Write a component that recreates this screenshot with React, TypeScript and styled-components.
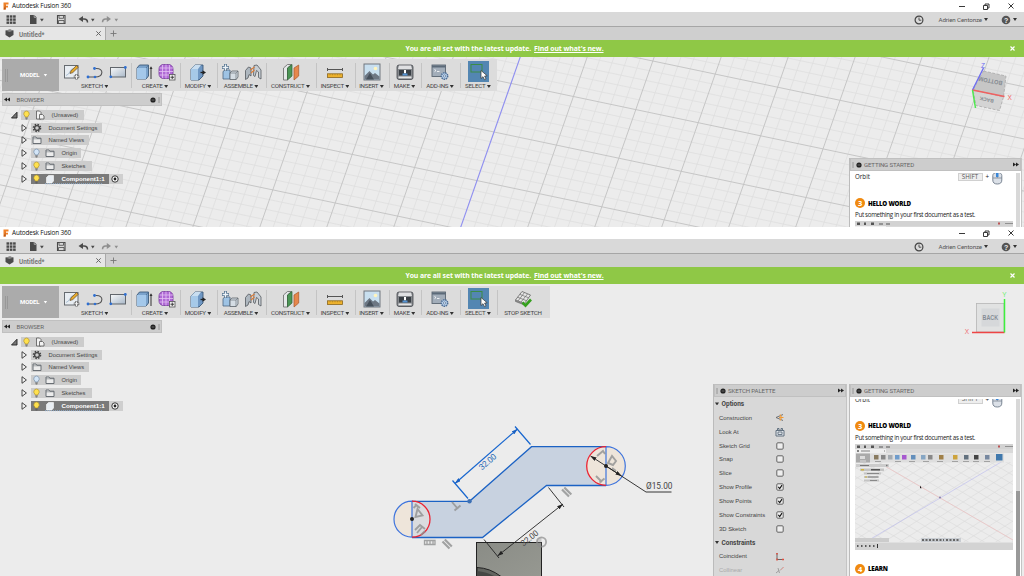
import React from 'react';
import styled, { createGlobalStyle, css } from 'styled-components';

const GlobalStyle = createGlobalStyle`
  * { box-sizing: border-box; }
  html, body { margin: 0; padding: 0; background: #fff; overflow: hidden; }
  body { font-family: 'Liberation Sans', Arial, sans-serif; color: #333; }
  svg { display: block; flex: none; overflow: visible; }
`;

const Screen = styled.div`
  width: 1024px;
  height: 576px;
  display: grid;
  grid-template-rows: 227px 349px;
  overflow: hidden;
`;

const Window = styled.section`
  display: grid;
  grid-template-rows: 12px 15px 13px 17px minmax(0, 1fr);
  overflow: hidden;
`;

const TitleBar = styled.header`
  display: flex;
  align-items: center;
  padding: 0 10px 0 3px;
  background: #fff;
  justify-content: space-between;
`;

const AppName = styled.div`
  display: flex;
  align-items: center;
  gap: 3px;
  font: 6.4px/12px 'Open Sans', 'Noto Sans', sans-serif;
  letter-spacing: -0.15px;
  color: #111;
`;

const Controls = styled.div`
  display: flex;
  align-items: center;
  gap: 18px;
`;

const QuickBar = styled.div`
  display: flex;
  align-items: center;
  justify-content: space-between;
  background: #d9d9d9;
  border-bottom: 1px solid #a6a6a6;
  padding: 1px 7px 0 5px;
`;

const Account = styled.div`
  display: flex;
  align-items: center;
  font: 6.2px/12px Roboto, sans-serif;
  letter-spacing: -0.12px;
  color: #555;
`;

const UserName = styled.span`
  margin: 0 3px 0 14.5px;
  width: 42.5px;
  white-space: nowrap;
`;

const Spacer = styled.i<{ $w: number }>`
  flex: none;
  width: ${(p) => p.$w}px;
`;

const Caret = styled.i<{ $c?: string }>`
  display: inline-block;
  flex: none;
  width: 4px;
  height: 3px;
  background: ${(p) => p.$c ?? '#333'};
  clip-path: polygon(0 0, 100% 0, 50% 100%);
`;

const TabStrip = styled.div`
  display: flex;
  background: #cfcfcf;
  height: 13px;
`;

const Tab = styled.div`
  display: flex;
  align-items: center;
  width: 106px;
  padding: 0 4px 0 5px;
  background: #e6e6e6;
  border-right: 1px solid #aaa;
  font: bold 6.4px/12px Roboto, sans-serif;
  color: #777;
  span { flex: 1; padding: 2px 0 0 5px; }
`;

const NewTab = styled.div`
  display: flex;
  align-items: center;
  padding-left: 4px;
`;

const Notice = styled.div`
  display: grid;
  grid-template-columns: 1fr auto;
  align-items: center;
  padding-right: 9px;
  background: #8fc846;
  color: #fff;
  font: bold 6.9px/16px 'Open Sans', sans-serif;
  letter-spacing: -0.09px;
  p { margin: 0; padding-right: 1px; text-align: center; white-space: pre; }
  u { margin-left: 3px; }
`;

const Viewport = styled.main`
  position: relative;
  display: flex;
  justify-content: space-between;
  overflow: hidden;
  background: #ececec;
`;

const Scene = styled.svg`
  position: absolute;
  inset: 0;
`;

const LeftStack = styled.div`
  position: relative;
  padding: 2px 0 0 2px;
`;

const Ribbon = styled.div`
  display: flex;
  height: 32px;
  background: #dcdcdc;
`;

const Workspace = styled.div`
  display: flex;
  align-items: center;
  width: 57px;
  padding-left: 3px;
  background: #ababab;
  color: #fff;
  font: bold 6px/10px Roboto, sans-serif;
  letter-spacing: -0.1px;
  span { margin: 0 4px 0 12px; }
`;

const Grip = styled.i`
  width: 3px;
  height: 13px;
  border: solid #989898;
  border-width: 0 1px;
`;

const Group = styled.div<{ $w: number; $first?: boolean }>`
  width: ${(p) => p.$w}px;
  padding-top: 2px;
  display: flex;
  flex-direction: column;
  align-items: center;
  ${(p) => !p.$first && css`background: linear-gradient(#c4c4c4, #c4c4c4) 0 4px / 1px 25px no-repeat;`}
`;

const GroupIcons = styled.div`
  display: flex;
  gap: 5px;
  height: 22px;
  align-items: center;
`;

const GroupLabel = styled.div`
  display: flex;
  align-items: center;
  gap: 1.5px;
  white-space: nowrap;
  font: 6.2px/9px Roboto, sans-serif;
  letter-spacing: -0.23px;
  color: #444;
`;

const SelectTile = styled.div`
  width: 21px;
  height: 21px;
  background: #5386b2;
  display: grid;
  place-items: center;
`;

const BarHeader = styled.div<{ $w?: number; $top?: number }>`
  display: flex;
  align-items: center;
  flex: none;
  height: 13px;
  width: ${(p) => (p.$w ? `${p.$w}px` : 'auto')};
  margin-top: ${(p) => p.$top ?? 0}px;
  background: #cdcdcd;
  border: 1px solid #c0c0c0;
  font: 6.1px/11px Roboto, sans-serif;
  color: #666;
  padding: 0 1px;
  gap: 2px;
  span { flex: 1; white-space: nowrap; }
`;

const PanelTitle = styled.span<{ $pad?: number; $tight?: boolean }>`
  padding-left: ${(p) => p.$pad ?? 0}px;
  letter-spacing: ${(p) => (p.$tight ? '-0.15px' : '-0.08px')};
`;

const Tree = styled.div`
  padding-top: 2.4px;
  margin-left: 8px;
`;

const TreeRow = styled.div<{ $child?: boolean }>`
  display: flex;
  align-items: center;
  height: 12.8px;
  padding-left: ${(p) => (p.$child ? 11 : 0)}px;
  gap: ${(p) => (p.$child ? 4 : 3)}px;
`;

const TreeCell = styled.div<{ $w: number; $active?: boolean }>`
  display: flex;
  align-items: center;
  height: 10px;
  width: ${(p) => p.$w}px;
  padding-left: 1px;
  gap: 4px;
  background: ${(p) => (p.$active ? 'linear-gradient(90deg, #7a7a7a 78px, #cfcfcf 78px)' : '#cccccc')};
  color: ${(p) => (p.$active ? '#fff' : '#444')};
  font: ${(p) => (p.$active ? 'bold 6.2px' : '5.8px')}/10px 'Liberation Sans', sans-serif;
  span { white-space: nowrap; padding-left: 2.5px; }
`;

const ActiveName = styled.span`
  width: 47.5px;
  flex: none;
`;

const Dock = styled.div`
  position: relative;
  display: flex;
  align-items: flex-end;
  gap: 2px;
  padding-right: 2px;
`;

const Palette = styled.aside<{ $w: number; $h: number; $white?: boolean }>`
  width: ${(p) => p.$w}px;
  height: ${(p) => p.$h}px;
  display: flex;
  flex-direction: column;
  overflow: hidden;
  background: ${(p) => (p.$white ? '#fff' : '#d8d8d8')};
  border-left: 1px solid #bbb;
  border-right: 1px solid #c4c4c4;
`;

const OptionRow = styled.div<{ $head?: boolean; $off?: boolean }>`
  display: grid;
  grid-template-columns: 54.5px 12px;
  align-items: center;
  flex: none;
  height: 13.87px;
  padding-left: ${(p) => (p.$head ? 1 : 5)}px;
  font: ${(p) => (p.$head ? 'bold 6.5px Roboto' : "5.9px 'Liberation Sans'")}, sans-serif;
  color: ${(p) => (p.$off ? '#aaa' : '#444')};
  white-space: nowrap;
  svg { justify-self: center; }
`;

const HeadText = styled.span`
  display: flex;
  align-items: center;
  gap: 2.5px;
`;

const Guide = styled.div`
  display: flex;
  flex: 1;
  min-height: 0;
  overflow: hidden;
  border-top: 2px solid #fff;
`;

const GuideBody = styled.div<{ $shift: number }>`
  width: 158px;
  margin-left: 5px;
  margin-top: ${(p) => p.$shift}px;
  font: 6.2px/9px 'Open Sans', sans-serif;
  color: #222;
  white-space: nowrap;
`;

const OrbitLine = styled.div`
  display: flex;
  height: 15px;
  align-items: flex-start;
  > span { width: 102.5px; padding-top: 1px; }
  > em { font-style: normal; width: 6px; padding-top: 1px; }
`;

const Key = styled.div`
  flex: none;
  width: 25px;
  height: 8.5px;
  margin: 1.5px 3px 0 0;
  border: 1px solid #d0d0d0;
  background: #eee;
  text-align: center;
  font: 6.2px/6.5px 'Open Sans', sans-serif;
  color: #555;
`;

const Step = styled.div<{ $top: number }>`
  display: flex;
  align-items: center;
  gap: 3px;
  height: 10px;
  margin-top: ${(p) => p.$top}px;
  font-weight: 800;
  font-size: 6.2px;
  letter-spacing: -0.25px;
  color: #000;
  b {
    width: 10px;
    height: 10px;
    border-radius: 50%;
    background: #f08a10;
    color: #fff;
    text-align: center;
    font: bold 7.5px/10px 'Open Sans', sans-serif;
  }
`;

const Para = styled.p`
  margin: 2px 0 2px;
  letter-spacing: -0.31px;
`;

const Scrollbar = styled.div<{ $thumb?: number }>`
  width: 4px;
  margin-left: 3px;
  background: linear-gradient(#d8d8d8 ${(p) => p.$thumb ?? 999}px, #999 0);
`;

const Svg = ({ w = 18, h = 18, children }: { w?: number; h?: number; children: React.ReactNode }) => (
  <svg width={w} height={h} viewBox={`0 0 ${w} ${h}`} fill="none">{children}</svg>
);

/* ---------- ribbon icons ---------- */

const SketchIcon = () => (
  <Svg>
    <rect x="1.5" y="2.5" width="13.5" height="12.5" fill="#e8edf2" stroke="#666b70" />
    <path d="M3 12.5q3-1 4-4t4-3" stroke="#9ab4cc" strokeWidth=".8" />
    <path d="M7 10.5l1-2.7 5.5-5.3 1.8 1.8-5.5 5.3z" fill="#e4a92c" stroke="#684b22" strokeWidth=".7" />
    <path d="M13.5 11v5.5M10.8 13.8h5.5" stroke="#666" strokeWidth="2.4" />
    <path d="M13.5 11.6v4.3M11.4 13.8h4.2" stroke="#f2f2f2" strokeWidth="1.1" />
  </Svg>
);
const LineIcon = () => (
  <Svg>
    <path d="M2 14h7M9 14c9 0 9-9 1-8.5" stroke="#555" strokeWidth="1.1" />
    <path d="M9.5 5.5H8" stroke="#4d7bb4" strokeWidth="1.2" />
    <g fill="#2f6fd0"><circle cx="2" cy="14" r="1.4" /><circle cx="9" cy="14" r="1.3" /><circle cx="8.5" cy="5.5" r="1.4" /></g>
  </Svg>
);
const RectIcon = () => (
  <Svg>
    <rect x="1.5" y="4.5" width="15" height="9.5" fill="url(#metal)" stroke="#61666c" />
    <g fill="#2f6fd0"><circle cx="1.8" cy="13.8" r="1.4" /><circle cx="16.3" cy="4.5" r="1.4" /></g>
  </Svg>
);
const ExtrudeIcon = () => (
  <Svg>
    <path d="M2 5l2.500-3h9v11l-2.500 3H2z" fill="#7ba3cc" stroke="#3c5a78" strokeWidth=".9" />
    <path d="M2 5h9v11H2z" fill="#a4c8ea" />
    <path d="M11 5l2.500-3" stroke="#47678a" strokeWidth=".7" />
    <path d="M16 16V4.500" stroke="#333" /><path d="M14.500 6L16 3.200 17.500 6z" fill="#333" />
  </Svg>
);
const FormIcon = () => (
  <Svg>
    <rect x="1" y="1.500" width="14" height="14" rx="4.500" fill="#b06ad6" stroke="#73399b" strokeWidth=".8" />
    <path d="M4.500 2v13M8 1.500v14M11.500 2v13M1.500 5h13.500M1 8.500h14M1.500 12h13.500" stroke="#e3c2f3" strokeWidth=".8" />
    <rect x="11.500" y="11.500" width="5.500" height="5.500" fill="#eee" stroke="#555" strokeWidth=".8" />
    <path d="M14.250 12.500v3.500M12.500 14.250h3.500" stroke="#333" strokeWidth=".9" />
  </Svg>
);
const ModifyIcon = () => (
  <Svg>
    <path d="M2 6l4-4h8v11l-4 4H2z" fill="#6f97c3" stroke="#3c5a78" strokeWidth=".9" />
    <path d="M2 6h7v11H2z" fill="#a6c9e8" /><path d="M2 6l4-4h6L9 6z" fill="#c9def0" />
    <path d="M11.500 9.500H15" stroke="#222" strokeWidth="1.300" /><path d="M13.500 7.300v4.400l3.500-2.200z" fill="#222" />
  </Svg>
);
const AssembleIcon = () => (
  <Svg>
    <path d="M2 8.500L4 7h5v9H2z" fill="#9ec3e4" stroke="#4b6680" strokeWidth=".8" />
    <path d="M9 10l1.800-2H17v6l-1.800 2.500H9z" fill="#d5dde4" stroke="#5a6268" strokeWidth=".8" />
    <path d="M9 10h6v6.500M15 10l2-2" stroke="#5a6268" strokeWidth=".6" />
    <path d="M4.500 1v7M1 4.500h7" stroke="#56748f" strokeWidth="3" /><path d="M4.500 1.600v5.800M1.600 4.500h5.800" stroke="#edf3f8" strokeWidth="1.300" />
  </Svg>
);
const JointIcon = () => (
  <Svg>
    <path d="M1.500 7.500L4.500 4 7 5v8l-2-1.500-1 3.500-2.500 1.500z" fill="#aeb7bf" stroke="#54595e" strokeWidth=".8" />
    <path d="M10 2.500l3-.5 4 5v9l-2.500-1.500V9l-2-1.500-1.500 6-1.500-1z" fill="#c7ced4" stroke="#54595e" strokeWidth=".8" />
    <path d="M6.500 7l4-3M7 10l3.500-3" stroke="#de7d36" strokeWidth="1.100" />
  </Svg>
);
const ConstructIcon = () => (
  <Svg>
    <path d="M1.500 5l4-3.500h4l-4 3.500v12h-4z" fill="#e4e7e8" stroke="#666" strokeWidth=".8" />
    <path d="M5.500 5l4.500-3.500v11.500L5.500 17z" fill="#4b9655" stroke="#2f6236" strokeWidth=".7" />
    <path d="M12 5l4.700-3v11L12 17z" fill="#e6874c" stroke="#a85728" strokeWidth=".7" />
  </Svg>
);
const InspectIcon = () => (
  <Svg>
    <path d="M1.500 6.500h15M1.500 5v3M16.500 5v3" stroke="#555" />
    <rect x="1.500" y="10.800" width="15" height="3.700" fill="#edb22e" stroke="#8b671f" strokeWidth=".8" />
    <path d="M4 11v1.300M6.500 11v1.300M9 11v1.300M11.500 11v1.300M14 11v1.300" stroke="#8b671f" strokeWidth=".4" />
  </Svg>
);
const InsertIcon = () => (
  <Svg>
    <rect x="1" y="1" width="16" height="16" fill="#c8dfef" stroke="#70777e" />
    <circle cx="12.500" cy="5.500" r="1.800" fill="#fff5bd" />
    <path d="M1.500 13l5-5 3.500 3.500 2-1.500 4.500 3.500v3h-15z" fill="#6d7783" />
    <path d="M3 16.500l4-6.500 4 6.500z" fill="#46505b" />
  </Svg>
);
const MakeIcon = () => (
  <Svg>
    <rect x="1" y="2" width="16" height="14.500" rx="2" fill="#84888c" stroke="#44484c" strokeWidth=".8" />
    <path d="M3 2.500h12l1 3.500H2z" fill="#dfe0e2" />
    <rect x="3" y="7" width="12" height="5.500" fill="#3a4046" /><path d="M8 7h2v2.500L9 11 8 9.500z" fill="#fff" />
    <path d="M6.500 10.500h5v2h-5z" fill="#5594d5" /><rect x="2.500" y="13.500" width="13" height="1.800" fill="#e3e4e5" />
  </Svg>
);
const AddinsIcon = () => (
  <Svg>
    <rect x="1" y="2" width="13.500" height="11.500" fill="#a2adb9" stroke="#5b6672" strokeWidth=".9" />
    <path d="M1 3.500h13.500" stroke="#5c6a79" strokeWidth="2" />
    <path d="M3.500 6.500l1.500 1-1.500 1.200M6 8.500h2.500" stroke="#fff" strokeWidth=".8" />
    <circle cx="13.500" cy="13" r="3.200" fill="#b9d0e9" stroke="#4c6d96" strokeWidth="1.500" strokeDasharray="1.500 .7" />
    <circle cx="13.500" cy="13" r="1.100" fill="#fff" stroke="#4c6d96" strokeWidth=".7" />
  </Svg>
);
const SelectIcon = () => (
  <SelectTile>
    <Svg w={21} h={21}>
      <rect x="3" y="3.500" width="11" height="7.500" stroke="#3c8c46" />
      <path d="M13 9.500v8l2-1.800 1.500 3 1.500-.8-1.400-2.800 2.600-.3z" fill="#fff" stroke="#333" strokeWidth=".7" />
    </Svg>
  </SelectTile>
);
const StopIcon = () => (
  <Svg>
    <path d="M1.500 10L8 1.500 16.500 5 10.500 13.500z" fill="#e6e6e6" stroke="#666" strokeWidth=".8" />
    <path d="M4 11L10.500 2.500M7 12L13.500 4M3.500 7.200l9 3.500M5.700 4.300l9 3.500" stroke="#777" strokeWidth=".8" />
    <path d="M1.500 10v1.500l9 3.500v-1.500" fill="#888" stroke="#666" strokeWidth=".6" />
    <path d="M8.500 12.500l3 3 5.500-6" stroke="#35a01e" strokeWidth="2.600" />
  </Svg>
);

/* ---------- small icons ---------- */

const Bulb = ({ on }: { on?: boolean }) => (
  <Svg w={9} h={10}>
    <path d="M4.500 1a2.800 2.800 0 0 1 1.500 5.100V7H3v-.9A2.800 2.800 0 0 1 4.500 1z" fill={on ? '#ffe14e' : '#d3e5f7'} stroke={on ? '#b5962d' : '#7890ab'} strokeWidth=".7" />
    <path d="M3.300 8h2.400M3.700 9h1.600" stroke="#555" strokeWidth=".8" />
  </Svg>
);
const Folder = () => (
  <Svg w={10} h={10}>
    <path d="M1 2h3l.8 1.200H9V8.500H1z" fill="#ececec" stroke="#5c6269" strokeWidth=".9" />
    <path d="M1 3.800h8" stroke="#5c6269" strokeWidth=".5" />
  </Svg>
);
const DocIcon = () => (
  <Svg w={10} h={10}>
    <path d="M1.500 1h3l1.500 1.500V9h-4.500z" fill="#f2f2f2" stroke="#555" strokeWidth=".8" />
    <path d="M4.500 4.500h3L9 6v3H4.500z" fill="#f2f2f2" stroke="#555" strokeWidth=".8" />
  </Svg>
);
const Gear = () => (
  <Svg w={10} h={10}>
    <circle cx="5" cy="5" r="3.500" stroke="#444" strokeWidth="1.600" strokeDasharray="1.500 1.250" />
    <circle cx="5" cy="5" r="2.400" stroke="#444" strokeWidth="1.300" />
  </Svg>
);
const Cube = () => (
  <Svg w={10} h={10}>
    <path d="M1.500 3.500L3.500 1.500h5V7L6.800 9H1.500z" fill="#e9eef3" stroke="#fff" strokeWidth=".6" />
    <path d="M0 9.700h58" stroke="#92b7e0" strokeWidth=".8" strokeDasharray="1 1" />
  </Svg>
);
const Expander = () => <Svg w={6} h={8}><path d="M1 .700v6.600L5.400 4z" fill="#f4f4f4" stroke="#333" strokeWidth=".9" /></Svg>;
const Expanded = () => <Svg w={8} h={8}><path d="M1.500 7H7V1.200z" fill="#777" stroke="#222" strokeWidth=".9" /></Svg>;
const Rewind = ({ flip }: { flip?: boolean }) => (
  <Svg w={6} h={5}><path transform={flip ? 'translate(6 0) scale(-1 1)' : ''} d="M0 2.500L3 .5v4zM3 2.500L6 .5v4z" fill="#222" /></Svg>
);
const Dot = () => <Svg w={6} h={6}><circle cx="3" cy="3" r="2.600" fill="#222" /><path d="M1.600 3h2.800" stroke="#999" strokeWidth=".6" /></Svg>;
const EdgeGrip = () => <Svg w={2} h={8}><path d="M1 1v6" stroke="#888" strokeWidth=".8" /></Svg>;
const Check = ({ on }: { on?: boolean }) => (
  <Svg w={8} h={8}>
    <rect x=".8" y=".8" width="6.400" height="6.400" rx="1" fill="#eee" stroke="#555" strokeWidth=".9" />
    {on && <path d="M2.300 3.900l1.400 1.600 2.300-3.400" stroke="#111" strokeWidth="1.100" />}
  </Svg>
);

const QuickIcons = () => (
  <Svg w={120} h={13}>
    <g fill="#4a4a4a">
      {[0, 1, 2].map((r) => [0, 1, 2].map((c) => <rect key={`${r}${c}`} x={1.500 + c * 3.300} y={2.300 + r * 3.100} width="2.600" height="2.400" />))}
      <path d="M25 2h4.300l2.200 2.200V11H25z" />
      <path d="M35 5.800h3.800L36.900 8.600zM86 5.800h3.600L87.800 8.600z" />
    </g>
    <path d="M29.200 2v2.400h2.300" stroke="#d9d9d9" strokeWidth=".6" />
    <path d="M52.500 2.500h7.500v8h-7.500z" stroke="#4a4a4a" strokeWidth="1.100" />
    <path d="M54 2.500h4.500v2.800H54zM53.500 7.500h5.500v3h-5.500z" fill="#d9d9d9" stroke="#4a4a4a" strokeWidth=".8" />
    <path d="M76 6h3q3.500 0 3.500 3.400" stroke="#4a4a4a" strokeWidth="1.500" /><path d="M78 3.100v5.800L73.500 6z" fill="#4a4a4a" />
    <g opacity=".75"><path d="M103 6h-2.500q-3 0-3 3.200" stroke="#777" strokeWidth="1.400" /><path d="M101.800 3.100v5.800l4.200-2.900zM109.500 5.800h3.600l-1.800 2.800z" fill="#777" /></g>
  </Svg>
);

/* ---------- data ---------- */

const groups = [
  { label: 'SKETCH', w: 71.5, icons: [SketchIcon, LineIcon, RectIcon] },
  { label: 'CREATE', w: 49, icons: [ExtrudeIcon, FormIcon] },
  { label: 'MODIFY', w: 37, icons: [ModifyIcon] },
  { label: 'ASSEMBLE', w: 49, icons: [AssembleIcon, JointIcon] },
  { label: 'CONSTRUCT', w: 50, icons: [ConstructIcon] },
  { label: 'INSPECT', w: 39, icons: [InspectIcon] },
  { label: 'INSERT', w: 34, icons: [InsertIcon] },
  { label: 'MAKE', w: 32, icons: [MakeIcon] },
  { label: 'ADD-INS', w: 39, icons: [AddinsIcon] },
  { label: 'SELECT', w: 37, icons: [SelectIcon] },
];

const options: [string, React.ReactNode][] = [
  ['Construction', <Svg w={9} h={9}><path d="M8 1.500L1 4.500l7 3" stroke="#666" strokeWidth=".9" /><path d="M5 1.500l1.500 3L5 7.500M4 4.500h4.500" stroke="#f09a36" strokeWidth="1.100" /></Svg>],
  ['Look At', <Svg w={10} h={10}><path d="M1 3.500h8v5.500H1zM2.500 3V1.500h1.500V3M6 3V1.500h1.500V3" fill="#dfe4ea" stroke="#556575" strokeWidth=".9" /><path d="M3 5h4v2.500H3z" stroke="#556575" strokeWidth=".8" /></Svg>],
  ['Sketch Grid', <Check />],
  ['Snap', <Check />],
  ['Slice', <Check />],
  ['Show Profile', <Check on />],
  ['Show Points', <Check on />],
  ['Show Constraints', <Check on />],
  ['3D Sketch', <Check />],
];

/* ---------- scenes ---------- */

const U = [62.4, 13.1];
const V = [-17, 48.6];
const gridLine = (along: number[], step: number[], k: number, key: string) => {
  const x = 494 + step[0] * k;
  const y = 132 - 57 + step[1] * k;
  return <line key={key} x1={x - along[0] * 16} y1={y - along[1] * 16} x2={x + along[0] * 16} y2={y + along[1] * 16} />;
};

const ModelScene = () => {
  const minor: React.ReactNode[] = [];
  const major: React.ReactNode[] = [];
  for (let i = -60; i <= 60; i++) {
    const list = i % 5 === 0 ? major : minor;
    list.push(gridLine(U, V, i / 5, `h${i}`));
    if (i !== 0) list.push(gridLine(V, U, i / 5, `v${i}`));
  }
  return (
    <Scene width="1024" height="170" viewBox="0 0 1024 170">
      <g stroke="#dedede" strokeWidth=".8">{minor}</g>
      <g stroke="#c2c2c2" strokeWidth=".9">{major}</g>
      <g stroke="#8f8ff0" strokeWidth="1.100">{gridLine(V, U, 0, 'axis')}</g>
      <g transform="translate(0 -57)">
        <path d="M983.500 71l22.500 5-2.500 21-30.500-7z" fill="#c6c6c6" stroke="#aaa" strokeWidth=".8" strokeDasharray="3 1.500" />
        <path d="M973 90l30.500 7-4 13.500-23.500-5z" fill="#d4d4d4" stroke="#aaa" strokeWidth=".8" strokeDasharray="3 1.500" />
        <g fontFamily="Liberation Sans, sans-serif" fontWeight="bold" fill="#858b92" textAnchor="middle">
          <text fontSize="6" transform="translate(991 79) rotate(191)" textLength="24" lengthAdjust="spacingAndGlyphs">BOTTOM</text>
          <text fontSize="5" transform="translate(987 98) rotate(191)">BACK</text>
        </g>
        <path d="M972.500 90L983.500 68" stroke="#6d6df0" strokeWidth="1.400" />
        <path d="M972.500 90l32 6.500" stroke="#f06060" strokeWidth="1.300" />
        <path d="M972.500 90l3 18" stroke="#50e850" strokeWidth="1.500" />
        <g fontFamily="Liberation Sans, sans-serif" fontSize="6.500"><text x="981" y="68" fill="#6d6df0">Z</text><text x="1007.500" y="100" fill="#f06060">X</text></g>
      </g>
    </Scene>
  );
};

const SketchScene = () => (
  <Scene width="1024" height="292" viewBox="0 284 1024 292" fill="none">
    <defs>
      <marker id="ab" viewBox="0 0 6 4" refX="6" refY="2" markerWidth="6" markerHeight="4" markerUnits="userSpaceOnUse" orient="auto-start-reverse"><path d="M0 0l6 2-6 2z" fill="#1b62c4" /></marker>
      <marker id="ak" viewBox="0 0 6 4" refX="6" refY="2" markerWidth="6" markerHeight="4" markerUnits="userSpaceOnUse" orient="auto-start-reverse"><path d="M0 0l6 2-6 2z" fill="#222" /></marker>
      <linearGradient id="box" x1="0" y1="0" x2="1" y2="1"><stop stopColor="#8a8c86" /><stop offset="1" stopColor="#979992" /></linearGradient>
    </defs>
    <rect x="476.500" y="542.500" width="65" height="40" fill="url(#box)" stroke="#222" />
    <path d="M477 567.500q13 .5 24 9h-24z" fill="#62645f" stroke="#222" />
    <path d="M477 571q10 1 17 5h-17z" fill="#454744" />
    <circle cx="541.500" cy="542" r="4.600" stroke="#8b8b8b" strokeOpacity=".7" strokeWidth="1.800" />
    <path d="M541.500 537.500a4.500 4.500 0 0 0 0 9z" fill="#8b8b8b" fillOpacity=".35" />

    <path d="M412 501.300h57.500l62-54.600H606v38.600h-60l-63.500 52H412z" fill="#c8d2e0" />
    <circle cx="412" cy="519.200" r="18" fill="#eee5da" />
    <path d="M412 501.200a18 18 0 0 1 0 36z" fill="#dbdcdf" />
    <circle cx="606" cy="466" r="19.300" fill="#eee5da" />
    <path d="M412 501.300h57.500l62-54.600H606M606 485.500h-59.500l-64 52H412" stroke="#1b62c4" strokeWidth="1.300" />
    <path d="M412 501.200a18 18 0 0 0 0 36zM606 446.700a19.300 19.300 0 0 1 0 38.600z" stroke="#3e74dd" strokeWidth="1.200" />
    <path d="M412 501.200a18 18 0 0 1 0 36M606 446.700a19.300 19.300 0 0 0 0 38.600" stroke="#ec2433" strokeWidth="1.300" />
    <circle cx="469.500" cy="501.300" r="2.200" fill="#3c70b4" />
    <g stroke="#8f9090" strokeOpacity=".8" strokeWidth="1.900">
      <path d="M415 504l5 4M413.500 508l3.500-3.500M415.500 517l2-8 5 6.500zM415 530l5-5 5 4M417 533l5-6M421 535l4-4" />
      <path d="M452 502l6 7M454.500 510.500l6-5" />
      <path d="M424.500 540.500h10.500v4h-10.500zM427 541v3M430 541v3M433 541v3" strokeWidth="1.300" />
      <path d="M442.500 541.500l7 7M444.800 539.500l7 7M562 489.500l7 7M564.300 487.500l7 7" strokeWidth="2.200" />
      <path d="M597 456l6-5 2 3M596 476l6 6M599.500 482.500l5-4M608 463l4-7 4 5-3 4zM612 468l4 3" />
    </g>
    <g stroke="#1766cf">
      <path d="M452.500 480.500l15.500 18M515 426.500l15.500 18" strokeWidth="1.200" />
      <path d="M455 483.500l62.500-54.500" markerStart="url(#ab)" markerEnd="url(#ab)" strokeWidth="1.200" />
    </g>
    <g stroke="#222" strokeWidth=".9">
      <path d="M484 539.500l15 18.500M548.500 487.500l15.500 19.500" />
      <path d="M497.500 556l65.500-52" markerStart="url(#ak)" markerEnd="url(#ak)" />
      <path d="M606 466l40 26h25.500" />
      <path d="M590.500 456l31 20" markerStart="url(#ak)" markerEnd="url(#ak)" />
    </g>
    <g fontFamily="Roboto, sans-serif" fontSize="8.300">
      <text transform="translate(487.500 461.700) rotate(-41)" y="3" textAnchor="middle" fill="#2a6bb5" textLength="20">32.00</text>
      <text transform="translate(529.500 538) rotate(-39)" y="3" textAnchor="middle" fill="#444" textLength="20">32.00</text>
      <text x="646" y="488.800" fill="#444" textLength="26.500">Ø15.00</text>
    </g>
    <circle cx="412" cy="519" r="2" fill="#222" /><circle cx="606" cy="466" r="2" fill="#222" />

    <rect x="976.500" y="303.500" width="27.500" height="28.500" fill="#e1e2e2" stroke="#b5b5b5" strokeWidth=".8" />
    <rect x="981.500" y="308.500" width="18" height="18" fill="#d6d8da" />
    <path d="M972 332.400h32.500" stroke="#e44" strokeWidth="1.500" /><path d="M1004.500 332.500V299" stroke="#3df03d" strokeWidth="1.500" />
    <g fontFamily="Liberation Sans, sans-serif" fontSize="6.500" textAnchor="middle">
      <text x="990.300" y="320.300" fontWeight="bold" fill="#858c95" textLength="15.500" lengthAdjust="spacingAndGlyphs">BACK</text>
      <text x="1004.300" y="297" fill="#70ee70">Y</text><text x="967" y="334.300" fill="#ee7070">X</text>
    </g>
  </Scene>
);

const Preview = () => (
  <svg width="158" height="106" viewBox="0 0 158 106" fill="none">
    <rect width="158" height="106" fill="#ececec" />
    <clipPath id="pv"><rect y="18" width="158" height="80" /></clipPath>
    <g clipPath="url(#pv)" strokeWidth=".6">
      <g stroke="#dadada">{Array.from({ length: 26 }, (_, i) => <path key={i} d={`M${i * 16 - 200} 0l190 110M${i * 16 - 40} 0l-190 120`} />)}</g>
      <path d="M28 21l130 75" stroke="#eebaba" /><path d="M158 11L14 96" stroke="#b9b9ee" />
    </g>
    <rect width="158" height="5" fill="#d2d2d2" /><rect y="5" width="158" height="4" fill="#d9d9d9" /><rect y="5" width="31" height="4" fill="#efefef" />
    <g fill="#555"><path d="M2 1.500h3v2.500H2zM9 1.500h2v2.500H9zM16 1.500h3v2.500h-3zM24 2.500h4v1h-4zM31 2.500h4v1h-4z" /><path d="M143 1.500h2v2h-2z" fill="#b55" /><path d="M150 2.300h8v.8h-8zM2 6h2v2H2zM6 6.500h9v1H6zM29 6.500h1v1h-1z" opacity=".7" /></g>
    <rect x="1" y="9.500" width="148" height="9" fill="#dedede" /><rect x="1" y="9.500" width="14" height="9" fill="#aaa" /><path d="M5 12h5v3H5zM5 16.500h6v1H5z" fill="#ddd" />
    {[19, 26, 33, 40, 47, 56, 66, 73, 84, 98, 109, 119, 130].map((x, i) => (
      <rect key={x} x={x} y="11" width="4.500" height="4.500" fill={['#897b60', '#888', '#a4aab0', '#6f9ccc', '#a759cf', '#638fbc', '#86a6c4', '#888', '#a08048', '#cda33c', '#62717e', '#444', '#7788a0'][i]} />
    ))}
    {[20, 40, 54, 68, 82, 97, 108, 118, 129].map((x) => <rect key={x} x={x} y="17" width="6" height=".7" fill="#888" />)}
    <rect x="141" y="10" width="6.500" height="6.500" fill="#4079ad" />
    <rect x="1" y="20" width="33" height="3" fill="#ccc" /><path d="M5 21h9v1H5zM31 20.700h1.500v1.500H31z" fill="#777" />
    <g fill="#aaa"><path d="M5 24.500h24v2.500H5zM9 28.500h17v2H9zM9 32h15v2H9zM9 35.500h15v2H9z" fill="#c4c4c4" /><path d="M16 25h9v1.500h-9z" fill="#555" /><path d="M12 29h12v1H12zM13 32.500h10v1H13zM15 36h7v1h-7z" fill="#888" /><path d="M6 25h3v1.500H6zM10 32.500h2v1h-2z" fill="#d2b53e" /></g>
    <path d="M65 41.500v3l1-.8 1 1z" fill="#111" /><circle cx="85" cy="53.500" r="1" fill="#8a7faa" />
    <rect x="0" y="94" width="34" height="4" fill="#ccc" /><rect x="66" y="94" width="40" height="4" fill="#c9cdd2" />
    <path d="M67 96h22M91 96h13" stroke="#666" strokeWidth="1.800" strokeDasharray="2 1.500" />
    <rect y="98.500" width="158" height="7.500" fill="#d3d3d3" /><path d="M2 102h20" stroke="#333" strokeWidth="1.500" strokeDasharray="1.500 2.500" /><path d="M22.500 100v4" stroke="#333" />
  </svg>
);

const Mouse = () => (
  <Svg w={11} h={14}>
    <path d="M.8 6V4.500Q1 1.500 5.300 1.500T9.800 4.500V9q0 4-4.500 4T.8 9z" fill="#dbe0e7" stroke="#7b8694" />
    <path d="M1 7h9M5.300 1.500V7" stroke="#7b8694" strokeWidth=".8" /><rect x="4" y="2" width="2.500" height="4" fill="#3886d8" />
  </Svg>
);

const GettingStarted = ({ height, shift }: { height: number; shift: number }) => (
  <Palette $w={173} $h={height} $white>
    <BarHeader><EdgeGrip /><Dot /><PanelTitle $tight>GETTING STARTED</PanelTitle><Rewind flip /></BarHeader>
    <Guide>
      <GuideBody $shift={shift}>
        <OrbitLine><span>Orbit</span><Key>SHIFT</Key><em>+</em><Mouse /></OrbitLine>
        <Step $top={12}><b>3</b>HELLO WORLD</Step>
        <Para>Put something in your first document as a test.</Para>
        <Preview />
        <Step $top={14}><b>4</b>LEARN</Step>
      </GuideBody>
      <Scrollbar $thumb={shift < -3 ? 92 : undefined} />
    </Guide>
  </Palette>
);

const SketchPalette = () => (
  <Palette $w={134} $h={192}>
    <BarHeader><EdgeGrip /><Dot /><PanelTitle $tight>SKETCH PALETTE</PanelTitle><Rewind flip /></BarHeader>
    <OptionRow $head><HeadText><Caret />Options</HeadText></OptionRow>
    {options.map(([name, icon]) => <OptionRow key={name}><span>{name}</span>{icon}</OptionRow>)}
    <OptionRow $head><HeadText><Caret />Constraints</HeadText></OptionRow>
    <OptionRow><span>Coincident</span><Svg w={9} h={9}><path d="M2 1v6.500h6.500" stroke="#666" /><path d="M2 1v1.500M2 6.500v2M7 7.500h2" stroke="#e24b3b" strokeWidth="1.500" /></Svg></OptionRow>
    <OptionRow $off><span>Collinear</span><Svg w={9} h={9}><path d="M1 7l3-2.500M5 4.500L8.500 1M3 2l1.500 5" stroke="#999" strokeWidth=".9" /><path d="M6 4l3-3" stroke="#e7a39c" /></Svg></OptionRow>
  </Palette>
);

const Browser = () => (
  <>
    <BarHeader $w={160} $top={2}><Rewind /><PanelTitle $pad={4.500}>BROWSER</PanelTitle><Dot /><EdgeGrip /></BarHeader>
    <Tree>
      <TreeRow><Expanded /><TreeCell $w={63}><Bulb on /><DocIcon /><span>(Unsaved)</span></TreeCell></TreeRow>
      <TreeRow $child><Expander /><TreeCell $w={71}><Gear /><span>Document Settings</span></TreeCell></TreeRow>
      <TreeRow $child><Expander /><TreeCell $w={58}><Folder /><span>Named Views</span></TreeCell></TreeRow>
      <TreeRow $child><Expander /><TreeCell $w={50}><Bulb /><Folder /><span>Origin</span></TreeCell></TreeRow>
      <TreeRow $child><Expander /><TreeCell $w={61}><Bulb on /><Folder /><span>Sketches</span></TreeCell></TreeRow>
      <TreeRow $child>
        <Expander />
        <TreeCell $w={92} $active><Bulb on /><Cube /><ActiveName>Component1:1</ActiveName>
          <Svg w={8} h={8}><circle cx="4" cy="4" r="3.200" fill="#fff" stroke="#222" strokeWidth=".9" /><circle cx="4" cy="4" r="1.400" fill="#222" /></Svg>
        </TreeCell>
      </TreeRow>
    </Tree>
  </>
);

const FusionWindow = ({ sketching }: { sketching?: boolean }) => (
  <Window>
    <TitleBar>
      <AppName>
        <Svg w={6} h={8}><path d="M.5.500h5V2.500H3v1.300h2v1.800H3v2H.5z" fill="#ef8128" /><path d="M.5 7.500L2.500 3v4.500z" fill="#b8581c" /></Svg>
        Autodesk Fusion 360
      </AppName>
      <Controls>
        <Svg w={6} h={6}><path d="M0 3.500h6" stroke="#222" strokeWidth=".9" /></Svg>
        <Svg w={7} h={7}><path d="M.5 2.500h4v4H.5zM2 2V1H6v4H5" stroke="#222" strokeWidth=".9" /></Svg>
        <Svg w={6} h={6}><path d="M.5.500l5 5M5.500.500l-5 5" stroke="#222" strokeWidth=".9" /></Svg>
      </Controls>
    </TitleBar>
    <QuickBar>
      <QuickIcons />
      <Account>
        <Svg w={10} h={10}><circle cx="5" cy="5" r="3.900" stroke="#444" strokeWidth="1.200" /><path d="M5 2.500V5.200h2.300" stroke="#444" strokeWidth=".9" /></Svg>
        <UserName>Adrien Centonze</UserName><Caret />
        <Spacer $w={13} />
        <Svg w={10} h={10}><circle cx="5" cy="5" r="4.300" fill="#555" /><text x="5" y="7.500" textAnchor="middle" fontFamily="Liberation Sans, sans-serif" fontWeight="bold" fontSize="7" fill="#eee">?</text></Svg>
        <Spacer $w={2} /><Caret />
      </Account>
    </QuickBar>
    <TabStrip>
      <Tab>
        <Svg w={9} h={9}><path d="M.5 1.500L5 .5l3.500 1v4.500L4.500 8.500.5 6z" fill="#4b4b4b" /><path d="M.5 1.500L5 .5l3.500 1L4.500 3z" fill="#888" /></Svg>
        <span>Untitled*</span>
        <Svg w={5} h={5}><path d="M.3.300l4.400 4.400M4.700.300L.3 4.700" stroke="#666" /></Svg>
      </Tab>
      <NewTab><Svg w={7} h={7}><path d="M3.500.500v6M.5 3.500h6" stroke="#777" strokeWidth=".9" /></Svg></NewTab>
    </TabStrip>
    <Notice>
      <p>You are all set with the latest update.<u>Find out what's new.</u></p>
      <Svg w={5} h={5}><path d="M.5.500l4 4M4.500.500l-4 4" stroke="#fff" strokeWidth="1.200" /></Svg>
    </Notice>
    <Viewport>
      {sketching ? <SketchScene /> : <ModelScene />}
      <LeftStack>
        <Ribbon>
          <Workspace><Grip /><span>MODEL</span><Caret $c="#fff" /></Workspace>
          {groups.map((g, i) => (
            <Group key={g.label} $w={g.w} $first={i === 0}>
              <GroupIcons>{g.icons.map((Icon, n) => <Icon key={n} />)}</GroupIcons>
              <GroupLabel>{g.label}<Caret /></GroupLabel>
            </Group>
          ))}
          {sketching && <Group $w={53}><GroupIcons><StopIcon /></GroupIcons><GroupLabel>STOP SKETCH</GroupLabel></Group>}
        </Ribbon>
        <Browser />
      </LeftStack>
      <Dock>
        {sketching && <SketchPalette />}
        <GettingStarted height={sketching ? 192 : 69} shift={sketching ? -5.500 : -2} />
      </Dock>
    </Viewport>
  </Window>
);

export default function App() {
  return (
    <>
      <GlobalStyle />
      <svg width="0" height="0" style={{ position: 'absolute' }}>
        <defs><linearGradient id="metal" x1="0" y1="0" x2="1" y2="1"><stop stopColor="#f8f9fa" /><stop offset="1" stopColor="#a9b8c8" /></linearGradient></defs>
      </svg>
      <Screen>
        <FusionWindow />
        <FusionWindow sketching />
      </Screen>
    </>
  );
}
